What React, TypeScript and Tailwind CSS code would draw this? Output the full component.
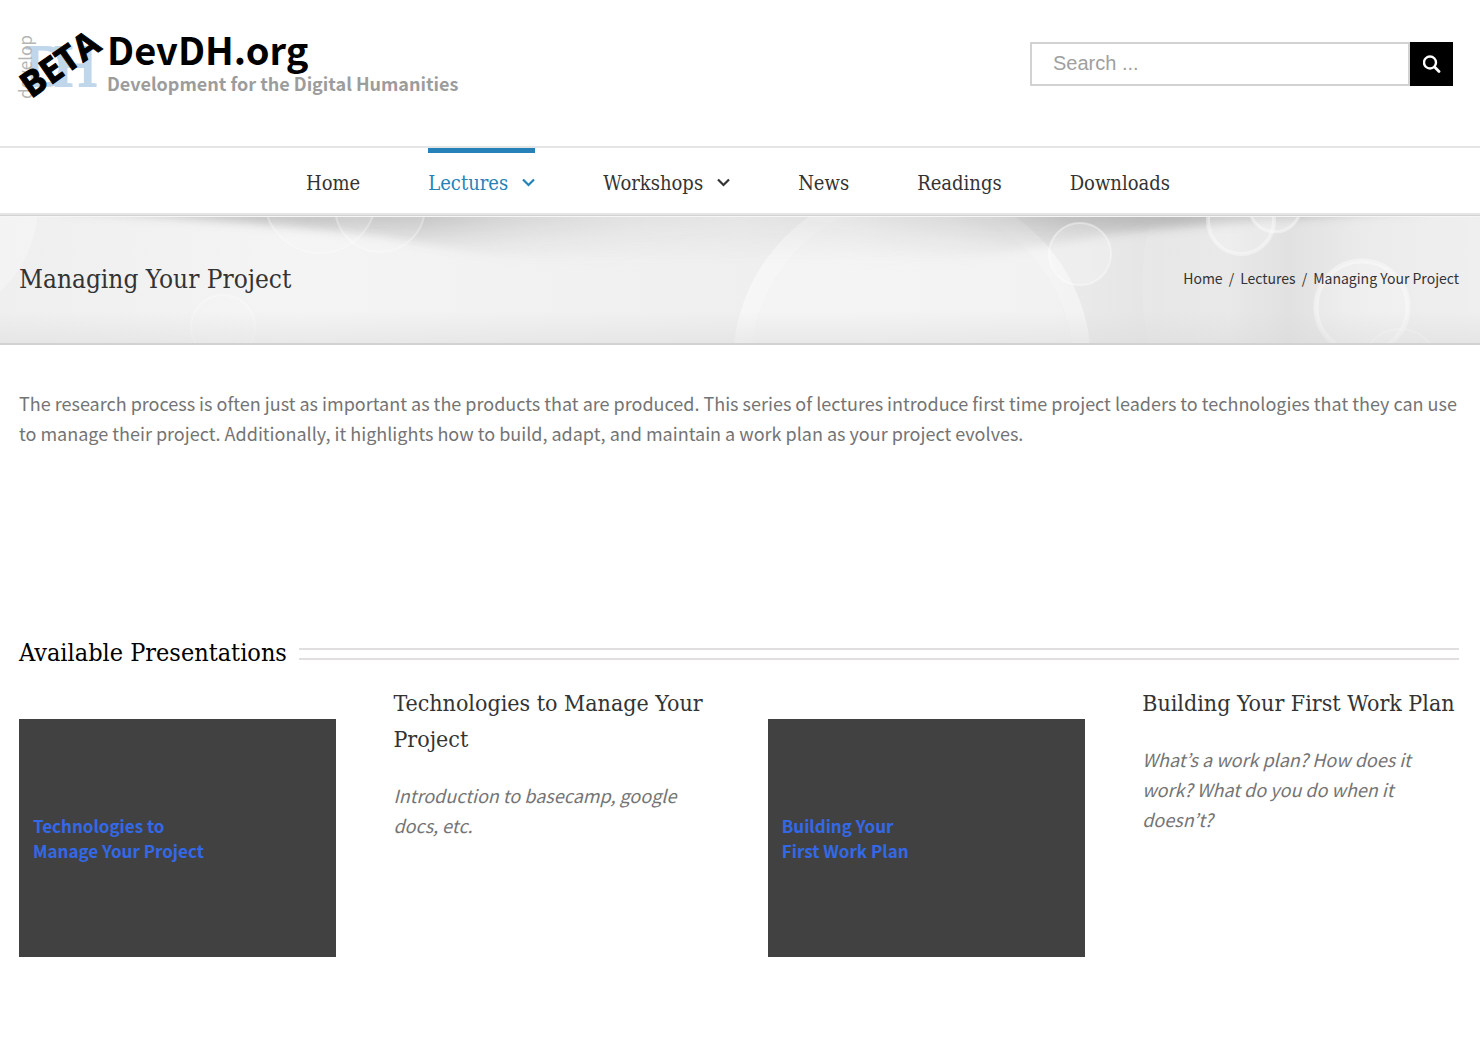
const navItems = [
  { label: "Home" },
  { label: "Lectures", menu: true, active: true },
  { label: "Workshops", menu: true },
  { label: "News" },
  { label: "Readings" },
  { label: "Downloads" },
];

const talks = [
  {
    title: "Technologies to Manage Your Project",
    cover: ["Technologies to", "Manage Your Project"],
    text: "Introduction to basecamp, google docs, etc.",
  },
  {
    title: "Building Your First Work Plan",
    cover: ["Building Your", "First Work Plan"],
    text: "What’s a work plan? How does it work? What do you do when it doesn’t?",
  },
];

function Logo() {
  return (
    <a href="#" aria-label="DevDH.org home" className="block">
      <svg width="466" height="90" viewBox="4 20 466 90" className="block">
        <text x="25 54" y="86" fontSize="60" fill="#c0d6eb" stroke="#c0d6eb" strokeWidth="2" className="font-['Liberation_Serif',serif]">DH</text>
        <text transform="translate(32 99) rotate(-90)" fontSize="17" fill="#b5b5b5" className="font-['Noto_Sans_CJK_KR',sans-serif]">develop</text>
        <text transform="translate(31 99) rotate(-35)" fontSize="35" fontWeight="700" fill="#000" stroke="#000" strokeWidth="1" className="font-['Open_Sans',sans-serif]">BETA</text>
        <text x="107" y="65" fontSize="38" fontWeight="700" fill="#000" className="font-['Noto_Sans_CJK_KR',sans-serif]">DevDH.org</text>
        <text x="107" y="91" fontSize="18" fontWeight="700" fill="#9c9c9c" className="font-['Noto_Sans_CJK_KR',sans-serif]">Development for the Digital Humanities</text>
      </svg>
    </a>
  );
}

function Caret() {
  return (
    <svg width="13" height="9" viewBox="0 0 13 9" fill="none" stroke="currentColor" strokeWidth="2.2" aria-hidden="true">
      <path d="M1 1.5l5.5 5.5L12 1.5" />
    </svg>
  );
}

function BannerArt() {
  return (
    <svg className="absolute inset-0 h-full w-full" viewBox="0 216 1480 127" preserveAspectRatio="xMidYMid slice" aria-hidden="true">
      <defs>
        <linearGradient id="base" x1="0" x2="1" y1="0" y2="0">
          <stop offset="0" stopColor="#efefef" />
          <stop offset="0.2" stopColor="#f4f4f4" />
          <stop offset="0.45" stopColor="#f0f0f0" />
          <stop offset="0.7" stopColor="#ececec" />
          <stop offset="0.78" stopColor="#e5e5e5" />
          <stop offset="0.83" stopColor="#e7e7e7" />
          <stop offset="0.87" stopColor="#dedede" />
          <stop offset="0.92" stopColor="#e9e9e9" />
          <stop offset="1" stopColor="#eeeeee" />
        </linearGradient>
        <linearGradient id="foot" x1="0" x2="0" y1="0" y2="1">
          <stop offset="0.75" stopColor="#d8d8d8" stopOpacity="0" />
          <stop offset="1" stopColor="#d8d8d8" stopOpacity="0.4" />
        </linearGradient>
        <linearGradient id="spread" gradientUnits="userSpaceOnUse" x1="60" x2="1420" y1="0" y2="0">
          <stop offset="0" stopColor="#fff" stopOpacity="0.5" />
          <stop offset="0.18" stopColor="#fff" />
          <stop offset="0.26" stopColor="#fff" stopOpacity="0.9" />
          <stop offset="0.34" stopColor="#fff" stopOpacity="0.5" />
          <stop offset="0.42" stopColor="#fff" stopOpacity="0.28" />
          <stop offset="0.5" stopColor="#fff" stopOpacity="0.2" />
          <stop offset="0.58" stopColor="#fff" stopOpacity="0.28" />
          <stop offset="0.66" stopColor="#fff" stopOpacity="0.5" />
          <stop offset="0.74" stopColor="#fff" stopOpacity="0.9" />
          <stop offset="0.82" stopColor="#fff" />
          <stop offset="1" stopColor="#fff" stopOpacity="0.5" />
        </linearGradient>
        <mask id="sides" maskUnits="userSpaceOnUse" x="0" y="190" width="1480" height="160">
          <rect y="190" width="1480" height="160" fill="url(#spread)" />
        </mask>
        <linearGradient id="shade" gradientUnits="userSpaceOnUse" x1="0" x2="0" y1="216" y2="262">
          <stop offset="0" stopColor="#808080" stopOpacity="0.45" />
          <stop offset="0.5" stopColor="#808080" stopOpacity="0.2" />
          <stop offset="1" stopColor="#808080" stopOpacity="0" />
        </linearGradient>
        <filter id="soft" x="-5%" y="-50%" width="110%" height="200%">
          <feGaussianBlur stdDeviation="4" />
        </filter>
      </defs>
      <rect y="216" width="1480" height="127" fill="url(#base)" />
      <circle cx="-80" cy="205" r="118" fill="#fff" fillOpacity="0.25" />
      <circle cx="912" cy="363" r="161" fill="#fff" fillOpacity="0.35" />
      <circle cx="912" cy="363" r="170" fill="none" stroke="#fff" strokeOpacity="0.45" strokeWidth="18" />
      <circle cx="1380" cy="285" r="238" fill="#fff" fillOpacity="0.1" />
      <g mask="url(#sides)">
        <path d="M0 190 L60 212 Q240 220 380 236 Q520 262 740 290 Q960 262 1100 236 Q1240 220 1420 212 L1480 190Z" fill="url(#shade)" filter="url(#soft)" />
      </g>
      <g fill="#fff" fillOpacity="0.22" stroke="#fff" strokeOpacity="0.4" strokeWidth="2">
        <circle cx="1080" cy="254" r="31" />
        <circle cx="1241" cy="221" r="33" strokeWidth="4" />
        <circle cx="1275" cy="206" r="26" strokeWidth="3" />
        <circle cx="1362" cy="307" r="46" strokeWidth="5" />
      </g>
      <g fill="#fff" fillOpacity="0.1" stroke="#fff" strokeOpacity="0.3" strokeWidth="2">
        <circle cx="223" cy="327" r="32" />
        <circle cx="320" cy="197" r="56" />
        <circle cx="380" cy="207" r="45" />
        <circle cx="1400" cy="367" r="38" />
      </g>
      <rect y="216" width="1480" height="127" fill="url(#foot)" />
      <rect y="216" width="1480" height="1" fill="#f6f6f6" />
    </svg>
  );
}

export default function App() {
  return (
    <div className="min-h-screen bg-white font-['Noto_Sans_CJK_KR',sans-serif] text-[#747474]">
      <header>
        <div className="flex h-[146px] items-start justify-between pt-5 pr-[27px] pl-1">
          <Logo />
          <form className="mt-[22px] flex h-11" onSubmit={(e) => e.preventDefault()}>
            <input
              type="search"
              aria-label="Search"
              placeholder="Search ..."
              className="w-[380px] border-2 border-[#d2d2d2] px-[21px] pb-0.5 font-['Liberation_Sans',sans-serif] text-xl text-[#747474] outline-none placeholder:text-[#a0a0a0]"
            />
            <button aria-label="Submit search" className="flex w-[43px] items-center justify-center bg-black text-white">
              <svg width="18" height="18" viewBox="0 0 18 18" fill="none" stroke="currentColor" strokeLinecap="round">
                <circle cx="7" cy="7.5" r="6" strokeWidth="2.4" />
                <path d="M11.6 12.1l4.4 4.4" strokeWidth="2.8" />
              </svg>
            </button>
          </form>
        </div>
        <nav className="flex h-[69px] justify-center gap-[68px] border-y-2 border-[#e5e5e5] pr-1 font-['DejaVu_Serif_Condensed','DejaVu_Serif',serif] text-xl text-[#333]">
          {navItems.map((item) => (
            <a
              key={item.label}
              href="#"
              className={
                item.active
                  ? "flex items-center gap-3.5 border-t-[5px] border-[#2482b8] pb-[1px] text-[#2482b8]"
                  : "flex items-center gap-3.5 border-t-[5px] border-transparent pb-[1px]"
              }
            >
              {item.label}
              {item.menu && <Caret />}
            </a>
          ))}
        </nav>
      </header>

      <section className="relative border-t border-b-2 border-t-[#d2d2d2] border-b-[#d2d2d2] pt-px">
        <BannerArt />
        <div className="relative flex h-[126px] items-center justify-between pr-[21px] pb-0.5 pl-[19px] text-[#333]">
          <h1 className="font-['DejaVu_Serif_Condensed','DejaVu_Serif',serif] text-[26px]">Managing Your Project</h1>
          <ol className="flex gap-1.5 pb-0.5 text-sm">
            <li><a href="#">Home</a></li>
            <li aria-hidden="true">/</li>
            <li><a href="#">Lectures</a></li>
            <li aria-hidden="true">/</li>
            <li>Managing Your Project</li>
          </ol>
        </div>
      </section>

      <main className="pt-[43px] pr-[21px] pl-[19px]">
        <p className="text-lg leading-[30px]">
          The research process is often just as important as the products that are produced. This series of lectures introduce first time project leaders to technologies that they can use to manage their project. Additionally, it highlights how to build, adapt, and maintain a work plan as your project evolves.
        </p>

        <div className="mt-[187px] flex items-center gap-3">
          <h2 className="font-['DejaVu_Serif_Condensed','DejaVu_Serif',serif] text-[25px] leading-9 text-black">Available Presentations</h2>
          <div className="mt-0.5 h-3 flex-1 border-y-2 border-[#e0dede]" />
        </div>

        <div className="mt-3.5 grid grid-cols-4 gap-x-[4%]">
          {talks.map((talk) => (
            <article key={talk.title} className="contents">
              <a href="#" className="mt-[34px] flex h-[238px] flex-col justify-center bg-[#414141] px-3.5 text-[17px] leading-[25px] font-bold text-[#3369e8]">
                {talk.cover.map((line) => (
                  <span key={line}>{line}</span>
                ))}
              </a>
              <div>
                <h3 className="font-['DejaVu_Serif_Condensed','DejaVu_Serif',serif] text-[23px] leading-9 text-[#333]">{talk.title}</h3>
                <p className="mt-[23px] pr-6 text-lg leading-[30px] italic">{talk.text}</p>
              </div>
            </article>
          ))}
        </div>
      </main>
    </div>
  );
}
